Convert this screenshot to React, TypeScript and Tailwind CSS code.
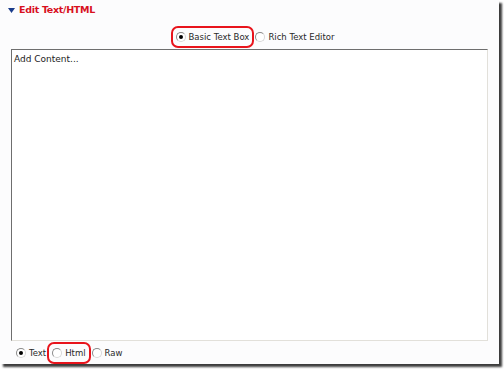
import React from "react";

const font = { fontFamily: '"DejaVu Sans", Verdana, sans-serif' };

function Radio({ checked = false }: { checked?: boolean }) {
  return (
    <span className="relative inline-flex h-[10px] w-[10px] shrink-0 items-center justify-center rounded-full border border-t-[#8a8a8a] border-l-[#8a8a8a] border-r-[#d8d8d8] border-b-[#d8d8d8] bg-white">
      {checked && <span className="h-[4px] w-[4px] rounded-full bg-black" />}
    </span>
  );
}

function Option({
  label,
  checked,
  circled,
}: {
  label: string;
  checked?: boolean;
  circled?: boolean;
}) {
  return (
    <label
      className={`flex items-center gap-[3px] ${
        circled ? "rounded-[7px] border-2 border-[#e8141c] py-[4px] pl-[3px] pr-[3px]" : ""
      }`}
    >
      <Radio checked={checked} />
      <span className="text-[8.5px] leading-none text-[#2a2a2a]">{label}</span>
    </label>
  );
}

export default function App() {
  return (
    <div className="h-[369px] w-[504px] bg-white" style={font}>
      <div className="flex h-[364px] w-[499px] flex-col bg-[#fcfcfd] shadow-[3px_3px_2px_#3c3c3c]">
        <div className="flex items-center gap-[4px] pl-[8px] pt-[3px]">
          <svg width="7" height="5" viewBox="0 0 7 5">
            <path d="M0 0h7L3.5 5z" fill="#1a3c8c" />
          </svg>
          <span className="text-[9.5px] font-bold tracking-[-0.3px] text-[#d8101e]">
            Edit Text/HTML
          </span>
        </div>

        <div className="mt-[9px] flex items-center justify-center gap-[1px] pl-[6px]">
          <Option label="Basic Text Box" checked circled />
          <Option label="Rich Text Editor" />
        </div>

        <div className="mx-[11px] mt-[1px] h-[296px] border border-t-[#6e6e6e] border-l-[#6e6e6e] border-r-[#e2e0da] border-b-[#e2e0da] bg-white px-[2px] pt-[3px] text-[9px] text-[#222]">
          Add Content...
        </div>

        <div className="mt-[1px] flex items-center gap-[1px] pl-[16px]">
          <Option label="Text" checked />
          <Option label="Html" circled />
          <Option label="Raw" />
        </div>
      </div>
    </div>
  );
}
